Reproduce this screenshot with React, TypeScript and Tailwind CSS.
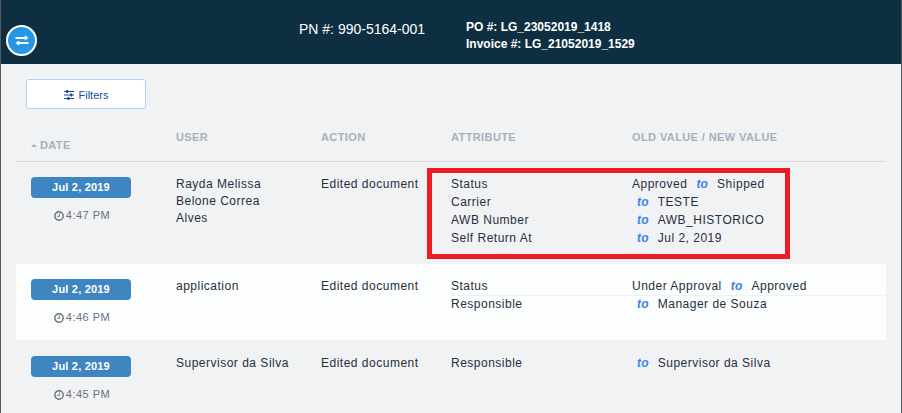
type Change = { attribute: string; from?: string; to: string };
type Entry = { date: string; time: string; user: string; action: string; changes: Change[] };

const entries: Entry[] = [
  {
    date: 'Jul 2, 2019',
    time: '4:47 PM',
    user: 'Rayda Melissa Belone Correa Alves',
    action: 'Edited document',
    changes: [
      { attribute: 'Status', from: 'Approved', to: 'Shipped' },
      { attribute: 'Carrier', to: 'TESTE' },
      { attribute: 'AWB Number', to: 'AWB_HISTORICO' },
      { attribute: 'Self Return At', to: 'Jul 2, 2019' },
    ],
  },
  {
    date: 'Jul 2, 2019',
    time: '4:46 PM',
    user: 'application',
    action: 'Edited document',
    changes: [
      { attribute: 'Status', from: 'Under Approval', to: 'Approved' },
      { attribute: 'Responsible', to: 'Manager de Souza' },
    ],
  },
  {
    date: 'Jul 2, 2019',
    time: '4:45 PM',
    user: 'Supervisor da Silva',
    action: 'Edited document',
    changes: [{ attribute: 'Responsible', to: 'Supervisor da Silva' }],
  },
];

const rowStyles = ['h-[102px] pt-[14px]', 'h-[76px] pt-[14px] bg-[#fcfdfd]', 'h-[73px] pt-[15px]'];

function ExchangeIcon() {
  return (
    <svg width="14" height="11" viewBox="0 0 14 11" fill="currentColor">
      <path d="M0.5 2.1H9.8V0.2L13.5 3L9.8 5.6V3.9H0.5Z" />
      <path d="M13.5 8.9H4.2V10.7L0.5 8L4.2 5.4V7.1H13.5Z" />
    </svg>
  );
}

function SlidersIcon() {
  return (
    <svg width="10" height="10" viewBox="0 0 10 10" fill="currentColor">
      <path d="M0 1h10v1H0zM0 4.5h10v1H0zM0 8h10v1H0z" />
      <path d="M2.2 0h2v3h-2zM6.2 3.5h2v3h-2zM3.4 7h2v3h-2z" />
    </svg>
  );
}

function ClockIcon() {
  return (
    <svg width="10" height="10" viewBox="0 0 10 10" fill="none" stroke="currentColor">
      <circle cx="5" cy="5" r="4.2" strokeWidth="1.4" />
      <path d="M5.4 2.4V5.4H3.1" strokeWidth="0.9" />
    </svg>
  );
}

function HistoryRow({ entry, index }: { entry: Entry; index: number }) {
  return (
    <div className={`flex shrink-0 pl-[15px] text-[12px] leading-[17px] tracking-[0.5px] text-[#252f40] ${rowStyles[index]}`}>
      <div className="w-[145px] shrink-0">
        <div className="mt-px flex h-[21px] w-[100px] items-center justify-center rounded bg-[#3f85c1] text-[11px] font-bold tracking-[0.2px] text-white">
          {entry.date}
        </div>
        <div className="mt-[9px] flex w-[100px] items-center justify-center gap-[2px] pl-[2px] text-[11px] text-[#69707f]">
          <ClockIcon />
          <span>{entry.time}</span>
        </div>
      </div>
      <div className="w-[145px] shrink-0 pr-[30px]">{entry.user}</div>
      <div className="w-[130px] shrink-0">{entry.action}</div>
      <div className="flex-1">
        {entry.changes.map((change, i) => (
          <div
            key={change.attribute}
            className={`flex h-[18px] leading-[17px] ${index === 1 && i === 0 ? 'border-b border-[#eef0f5]' : ''}`}
          >
            <span className="w-[181px] shrink-0">{change.attribute}</span>
            <span>{change.from}</span>
            <b className={`mr-[9px] italic tracking-[0.2px] text-[#3b82ee] ${change.from ? 'ml-[9px]' : 'ml-[5px]'}`}>to</b>
            <span>{change.to}</span>
          </div>
        ))}
      </div>
    </div>
  );
}

export default function App() {
  return (
    <div className="relative flex h-[413px] w-[902px] flex-col overflow-hidden border-x border-[#55585c] bg-[#f1f2f4] font-['Liberation_Sans',Arial,sans-serif]">
      <header className="flex h-16 shrink-0 bg-[#0e2e41] pl-[5px] text-white">
        <button className="mt-[25px] flex size-[31px] items-center justify-center rounded-full border-2 border-white bg-[#2697e4]">
          <ExchangeIcon />
        </button>
        <div className="ml-[262px] mt-[20px] w-[167px] text-[14px] leading-[18px]">PN #: 990-5164-001</div>
        <div className="mt-[19px] text-[12px] font-bold leading-[17px]">
          <div>PO #: LG_23052019_1418</div>
          <div>Invoice #: LG_21052019_1529</div>
        </div>
      </header>

      <button className="ml-[25px] mt-[15px] flex h-[30px] w-[120px] shrink-0 items-center justify-center gap-[5px] rounded-[3px] border border-[#b3cef8] bg-white pt-[2px] text-[11px] text-[#174a9e]">
        <SlidersIcon />
        <span>Filters</span>
      </button>

      <main className="mx-[15px] flex flex-col">
        <div className="flex h-[53px] shrink-0 border-b border-[#d9dbdf] pl-[15px] pt-[20px] text-[11px] font-bold leading-[17px] tracking-[0.4px] text-[#a5b0c1]">
          <div className="flex w-[145px] items-center gap-[3px]">
            <span className="h-0 w-0 border-x-[3px] border-b-[3px] border-x-transparent border-b-[#a5b0c1]" />
            DATE
          </div>
          <div className="w-[145px]">USER</div>
          <div className="w-[130px]">ACTION</div>
          <div className="w-[181px]">ATTRIBUTE</div>
          <div>OLD VALUE / NEW VALUE</div>
        </div>
        {entries.map((entry, i) => (
          <HistoryRow key={entry.time} entry={entry} index={i} />
        ))}
      </main>

      <div className="pointer-events-none absolute left-[426px] top-[168px] h-[91px] w-[363px] border-[5px] border-[#ed1c24]" />
    </div>
  );
}
